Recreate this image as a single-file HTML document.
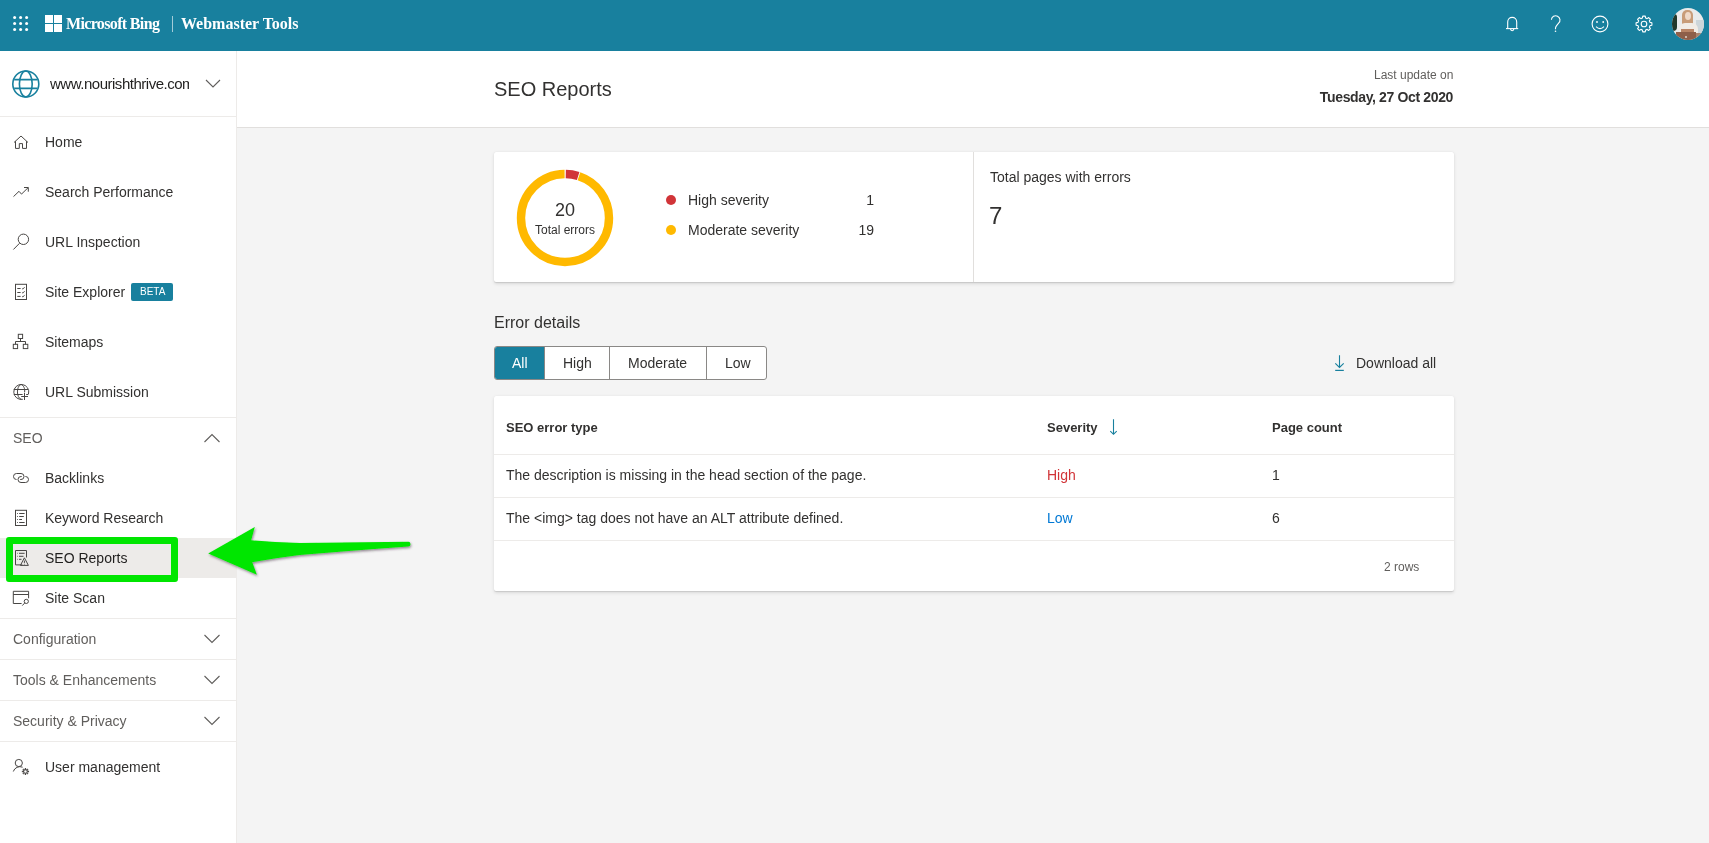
<!DOCTYPE html>
<html><head><meta charset="utf-8">
<style>
*{margin:0;padding:0;box-sizing:border-box}
html,body{width:1709px;height:843px;overflow:hidden;background:#f4f4f4;font-family:"Liberation Sans",sans-serif;color:#323130}
.a{position:absolute;white-space:nowrap;line-height:1;will-change:transform}
#hdr{position:absolute;left:0;top:0;width:1709px;height:51px;background:#18809e}
#side{position:absolute;left:0;top:51px;width:236px;height:792px;background:#fff}
#sideb{position:absolute;left:236px;top:51px;width:1px;height:792px;background:#edebe9}
.sep{position:absolute;left:0;width:236px;height:1px;background:#edebe9}
.nav{font-size:14px;color:#323130}
.sec{font-size:14px;color:#605e5c}
svg{position:absolute;overflow:visible}
#phdr{position:absolute;left:237px;top:51px;width:1472px;background:#fff;border-bottom:1px solid #e1dfdd;height:77px}
.card{position:absolute;background:#fff;border-radius:2px;box-shadow:0 0.3px 0.9px rgba(0,0,0,.1),0 1.6px 3.6px rgba(0,0,0,.11)}
</style></head><body>
<!-- HEADER -->
<div id="hdr"></div>
<svg style="left:0;top:0" width="1709" height="50">
<g fill="#fff">
<circle cx="14.6" cy="17.5" r="1.5"/><circle cx="20.6" cy="17.5" r="1.5"/><circle cx="26.6" cy="17.5" r="1.5"/>
<circle cx="14.6" cy="23.5" r="1.5"/><circle cx="20.6" cy="23.5" r="1.5"/><circle cx="26.6" cy="23.5" r="1.5"/>
<circle cx="14.6" cy="29.5" r="1.5"/><circle cx="20.6" cy="29.5" r="1.5"/><circle cx="26.6" cy="29.5" r="1.5"/>
<rect x="45" y="15" width="8" height="8"/><rect x="54" y="15" width="8" height="8"/>
<rect x="45" y="24" width="8" height="8"/><rect x="54" y="24" width="8" height="8"/>
</g>
<rect x="172" y="16" width="1" height="16" fill="rgba(255,255,255,.6)"/>
<g fill="none" stroke="#fff" stroke-width="1.1">
<path d="M1507.7 28.5 V21.9 A4.5 4.5 0 0 1 1516.7 21.9 V28.5"/>
<path d="M1506 28.6 H1518.2"/>
<path d="M1510.6 29.1 A1.6 1.6 0 0 0 1513.8 29.1"/>
<path d="M1551.4 19.8 A4.3 4.3 0 1 1 1558.6 23.2 L1556.6 25.6 Q1555.5 26.9 1555.5 28.2 V29.2"/>
<circle cx="1600" cy="24" r="7.9"/>
<path d="M1596 26.6 Q1600 30.6 1604 26.6"/>
<path d="M1649.99 22.40 L1651.90 22.75 L1651.90 25.25 L1649.99 25.60 L1649.37 27.10 L1650.47 28.70 L1648.70 30.47 L1647.10 29.37 L1645.60 29.99 L1645.25 31.90 L1642.75 31.90 L1642.40 29.99 L1640.90 29.37 L1639.30 30.47 L1637.53 28.70 L1638.63 27.10 L1638.01 25.60 L1636.10 25.25 L1636.10 22.75 L1638.01 22.40 L1638.63 20.90 L1637.53 19.30 L1639.30 17.53 L1640.90 18.63 L1642.40 18.01 L1642.75 16.10 L1645.25 16.10 L1645.60 18.01 L1647.10 18.63 L1648.70 17.53 L1650.47 19.30 L1649.37 20.90Z" stroke-linejoin="round"/>
<circle cx="1644" cy="24" r="2.8"/>
</g>
<g fill="#fff"><circle cx="1555.5" cy="31.3" r="0.8"/><circle cx="1597" cy="22" r="0.9"/><circle cx="1603.2" cy="22" r="0.9"/></g>
</svg>
<div class="a" style="left:66px;top:15.6px;font:bold 16px/1 'Liberation Serif',serif;color:#fff;letter-spacing:-0.65px">Microsoft Bing</div>
<div class="a" style="left:181px;top:15.6px;font:bold 16px/1 'Liberation Serif',serif;color:#fff">Webmaster Tools</div>
<div style="position:absolute;left:1672px;top:8px;width:32px;height:32px;border-radius:50%;overflow:hidden;background:#e9ebeb">
<div style="position:absolute;left:0;top:0;width:32px;height:32px;filter:blur(0.7px)">
 <div style="position:absolute;left:24px;top:12px;width:8px;height:13px;background:#cdd6da"></div>
 <div style="position:absolute;left:-1px;top:6px;width:6px;height:17px;border-radius:0 3px 4px 0;background:#22382a"></div>
 <div style="position:absolute;left:10px;top:2px;width:11px;height:17px;border-radius:5px 5px 3px 3px;background:#c89c78"></div>
 <div style="position:absolute;left:13px;top:4px;width:6px;height:8px;border-radius:50%;background:#efd9c8"></div>
 <div style="position:absolute;left:7px;top:15px;width:19px;height:12px;border-radius:6px 6px 0 0;background:#f1ece6"></div>
 <div style="position:absolute;left:9px;top:21px;width:13px;height:4px;background:#b98465"></div>
 <div style="position:absolute;left:24px;top:25px;width:8px;height:5px;background:#a98570"></div>
 <div style="position:absolute;left:4px;top:24px;width:20px;height:10px;background:#8e5f49"></div>
 <div style="position:absolute;left:13px;top:28px;width:2px;height:2px;background:#e2d2c8;border-radius:50%"></div>
</div>
</div>
<!-- SIDEBAR -->
<div id="side"></div>
<div id="sideb"></div>
<div class="sep" style="top:116px"></div>
<div class="sep" style="top:417px"></div>
<div class="sep" style="top:618px"></div>
<div class="sep" style="top:659px"></div>
<div class="sep" style="top:700px"></div>
<div class="sep" style="top:741px"></div>
<div style="position:absolute;left:0;top:538px;width:236px;height:40px;background:#edebe9"></div>
<svg style="left:0;top:0" width="240" height="843">
<g fill="none" stroke="#18809e" stroke-width="1.6">
<circle cx="25.8" cy="84" r="13"/>
<ellipse cx="25.8" cy="84" rx="6.4" ry="13"/>
<path d="M14.2 79.6 H37.4 M14.2 88.4 H37.4"/>
</g>
<path d="M206 80 L213 87 L220 80" fill="none" stroke="#605e5c" stroke-width="1.1"/>
<g fill="none" stroke="#484644" stroke-width="1">
<!-- home -->
<path d="M14 142.5 L21 136 L28 142.5 M15.5 141.2 V148.4 H19.3 V143.6 H22.5 V148.4 H26.5 V141.2"/>
<!-- search perf -->
<path d="M13.5 196.6 L19 191.3 L21.5 194.1 L28.2 187.6 M24 187.5 H28.3 V191.7"/>
<!-- url inspection -->
<circle cx="23.4" cy="239.3" r="5.2"/>
<path d="M19.6 243.2 L13.4 249.5"/>
<!-- site explorer -->
<rect x="15.5" y="284.3" width="11" height="15.2"/>
<path d="M17.3 288.5 H20.6 M17.3 292.5 H20.6 M17.3 296.4 H20.6"/>
<path d="M22 288.3 L23 289.2 L24.7 287 M22 292.3 L23 293.2 L24.7 291 M22 296.2 L23 297.1 L24.7 294.9" stroke-width=".8"/>
<!-- sitemaps -->
<rect x="18.3" y="334.3" width="4.3" height="4.2"/>
<rect x="13.3" y="344.3" width="4.3" height="4.3"/>
<rect x="23.3" y="344.3" width="4.5" height="4.3"/>
<path d="M20.5 338.5 V341.5 M15.5 344.3 V341.5 H25.5 V344.3"/>
<!-- url submission -->
<path d="M22.8 399.3 A7.5 7.5 0 1 1 28.5 394"/>
<path d="M21 384.3 C16.2 386.5 16.2 397.5 21.2 399.4 M21 384.3 C24.2 386 25 389 24.6 392.2"/>
<path d="M13.8 389.5 H28.2 M13.8 394.5 H22.6 M26.2 394.5 H28.4"/>
<path d="M24.5 392.8 V400 M21.2 396.5 H28"/>
<!-- backlinks -->
<path d="M16.5 479.5 A3 3 0 0 1 16.5 473.5 H21 A3 3 0 0 1 21 479.5 H20.2"/>
<path d="M21.7 476.5 H21 A3 3 0 0 0 21 482.5 H25.5 A3 3 0 0 0 25.5 476.5 H25.3"/>
<!-- keyword research -->
<rect x="15.5" y="510.3" width="11" height="15.2"/>
<path d="M19.2 513.5 H24.6 M19.2 516.5 H23.8 M19.2 519.5 H22 M19.2 522.5 H24.6"/>
<path d="M17.1 513.5 H17.9 M17.1 516.5 H17.9 M17.1 519.5 H17.9 M17.1 522.5 H17.9" stroke-width="1.1"/>
<!-- seo reports -->
<path d="M22.3 564.9 H15.5 V550.5 H26.5 V557.5"/>
<path d="M17.2 553.3 H17.8 M17.2 556.3 H17.8 M17.2 559.3 H17.8 M19 553.3 H24.6 M19 556.3 H23.5 M19 559.3 H21.5"/>
<path d="M24.4 557.8 L28.4 565.4 H20.4 Z M24.4 560.6 V562.9 M24.4 563.8 V564.4"/>
<!-- site scan -->
<path d="M21.6 603.5 H13.3 V591.3 H28.6 V598.3 M13.3 594.5 H28.6"/>
<circle cx="26.3" cy="601.4" r="2.1"/>
<path d="M24.8 602.9 L22.3 605.6"/>
<!-- user mgmt -->
<circle cx="18.8" cy="763" r="3.6"/>
<path d="M13.3 771.5 A7 7 0 0 1 22.6 767.2"/>
<circle cx="25.45" cy="771.5" r="1.9" stroke-width="1.2"/>
<path d="M27.95 771.50 L29.05 771.50 M27.22 773.27 L28.00 774.05 M25.45 774.00 L25.45 775.10 M23.68 773.27 L22.90 774.05 M22.95 771.50 L21.85 771.50 M23.68 769.73 L22.90 768.95 M25.45 769.00 L25.45 767.90 M27.22 769.73 L28.00 768.95" stroke-width="1.3"/>
</g>
<g fill="none" stroke="#605e5c" stroke-width="1.1">
<path d="M204.5 442 L212 434.5 L219.5 442"/>
<path d="M204.5 635 L212 642.5 L219.5 635"/>
<path d="M204.5 676 L212 683.5 L219.5 676"/>
<path d="M204.5 717 L212 724.5 L219.5 717"/>
</g>
</svg>
<div class="a" style="left:50px;top:76.3px;font-size:15px;letter-spacing:-0.48px;color:#201f1e;width:138.6px;overflow:hidden">www.nourishthrive.com</div>
<div class="a nav" style="left:45px;top:135.2px">Home</div>
<div class="a nav" style="left:45px;top:185.2px">Search Performance</div>
<div class="a nav" style="left:45px;top:235.2px">URL Inspection</div>
<div class="a nav" style="left:45px;top:285.2px">Site Explorer</div>
<div style="position:absolute;left:131px;top:283px;width:42px;height:18px;background:#18809e;border-radius:2px"></div>
<div class="a" style="left:140px;top:286.5px;font-size:10px;color:#fff">BETA</div>
<div class="a nav" style="left:45px;top:335.2px">Sitemaps</div>
<div class="a nav" style="left:45px;top:385.2px">URL Submission</div>
<div class="a sec" style="left:13px;top:431.2px">SEO</div>
<div class="a nav" style="left:45px;top:471.2px">Backlinks</div>
<div class="a nav" style="left:45px;top:511.2px">Keyword Research</div>
<div class="a nav" style="left:45px;top:551.2px;color:#201f1e">SEO Reports</div>
<div class="a nav" style="left:45px;top:591.2px">Site Scan</div>
<div class="a sec" style="left:13px;top:632.2px">Configuration</div>
<div class="a sec" style="left:13px;top:673.2px">Tools &amp; Enhancements</div>
<div class="a sec" style="left:13px;top:714.2px">Security &amp; Privacy</div>
<div class="a nav" style="left:45px;top:760.2px">User management</div>
<!-- PAGE HEADER -->
<div id="phdr"></div>
<div class="a" style="left:494px;top:79.1px;font-size:20px;color:#323130">SEO Reports</div>
<div class="a" style="left:1374px;top:68.8px;font-size:12px;color:#605e5c;width:79px;text-align:right">Last update on</div>
<div class="a" style="left:1303px;top:90px;font-size:14px;letter-spacing:-0.36px;font-weight:bold;color:#323130;width:150px;text-align:right">Tuesday, 27 Oct 2020</div>
<!-- summary card -->
<div class="card" style="left:494px;top:152px;width:960px;height:130px"></div>
<div style="position:absolute;left:973px;top:152px;width:1px;height:130px;background:#e1dfdd"></div>
<svg style="left:0;top:0" width="1709" height="843">
<circle cx="565" cy="218" r="44" fill="none" stroke="#ffb900" stroke-width="8.4" stroke-dasharray="261.4 15.06" stroke-dashoffset="-14.2" transform="rotate(-90 565 218)"/>
<circle cx="565" cy="218" r="44" fill="none" stroke="#d13438" stroke-width="8.4" stroke-dasharray="12.6 263.86" stroke-dashoffset="-0.8" transform="rotate(-90 565 218)"/>
<circle cx="671" cy="200" r="5" fill="#d13438"/>
<circle cx="671" cy="230" r="5" fill="#ffb900"/>
</svg>
<div class="a" style="left:545px;top:200.8px;font-size:18px;width:40px;text-align:center;color:#323130">20</div>
<div class="a" style="left:525px;top:223.8px;font-size:12px;width:80px;text-align:center;color:#323130">Total errors</div>
<div class="a" style="left:688px;top:193.2px;font-size:14px;color:#323130">High severity</div>
<div class="a" style="left:688px;top:223.2px;font-size:14px;color:#323130">Moderate severity</div>
<div class="a" style="left:834px;top:193.2px;font-size:14px;width:40px;text-align:right;color:#323130">1</div>
<div class="a" style="left:834px;top:223.2px;font-size:14px;width:40px;text-align:right;color:#323130">19</div>
<div class="a" style="left:990px;top:170.2px;font-size:14px;color:#323130">Total pages with errors</div>
<div class="a" style="left:988.5px;top:203.7px;font-size:24px;color:#323130">7</div>
<!-- error details -->
<div class="a" style="left:494px;top:314.5px;font-size:16px;color:#323130">Error details</div>
<div style="position:absolute;left:494px;top:346px;width:273px;height:34px;border:1px solid #8a8886;border-radius:3px;background:#fff;overflow:hidden">
 <div style="position:absolute;left:0;top:0;width:49px;height:32px;background:#18809e"></div>
 <div style="position:absolute;left:49px;top:0;width:1px;height:32px;background:#8a8886"></div>
 <div style="position:absolute;left:114px;top:0;width:1px;height:32px;background:#8a8886"></div>
 <div style="position:absolute;left:211px;top:0;width:1px;height:32px;background:#8a8886"></div>
</div>
<div class="a" style="left:511.5px;top:356.2px;font-size:14px;color:#fff">All</div>
<div class="a" style="left:562.5px;top:356.2px;font-size:14px;color:#323130">High</div>
<div class="a" style="left:628px;top:356.2px;font-size:14px;color:#323130">Moderate</div>
<div class="a" style="left:724.5px;top:356.2px;font-size:14px;color:#323130">Low</div>
<svg style="left:0;top:0" width="1709" height="843">
<g fill="none" stroke="#18809e" stroke-width="1.1">
<path d="M1339.5 355.2 V367.4 M1335.3 363.3 L1339.5 367.5 L1343.7 363.3"/>
<path d="M1335.2 370.4 H1343.8" stroke-width="1.2"/>
</g>
</svg>
<div class="a" style="left:1356px;top:356.2px;font-size:14px;color:#323130">Download all</div>
<!-- table -->
<div class="card" style="left:494px;top:396px;width:960px;height:195px"></div>
<div style="position:absolute;left:494px;top:454px;width:960px;height:1px;background:#edebe9"></div>
<div style="position:absolute;left:494px;top:497px;width:960px;height:1px;background:#edebe9"></div>
<div style="position:absolute;left:494px;top:540px;width:960px;height:1px;background:#edebe9"></div>
<div class="a" style="left:505.5px;top:421px;font-size:13px;font-weight:bold;color:#323130">SEO error type</div>
<div class="a" style="left:1047px;top:421px;font-size:13px;font-weight:bold;color:#323130">Severity</div>
<div class="a" style="left:1271.5px;top:421px;font-size:13px;font-weight:bold;color:#323130">Page count</div>
<div class="a" style="left:505.5px;top:468.2px;font-size:14px;color:#323130">The description is missing in the head section of the page.</div>
<div class="a" style="left:1047px;top:468.2px;font-size:14px;color:#d13438">High</div>
<div class="a" style="left:1271.5px;top:468.2px;font-size:14px;color:#323130">1</div>
<div class="a" style="left:505.5px;top:511.2px;font-size:14px;color:#323130">The &lt;img&gt; tag does not have an ALT attribute defined.</div>
<div class="a" style="left:1047px;top:511.2px;font-size:14px;color:#0078d4">Low</div>
<div class="a" style="left:1271.5px;top:511.2px;font-size:14px;color:#323130">6</div>
<div class="a" style="left:1384px;top:560.8px;font-size:12px;color:#605e5c">2 rows</div>
<svg style="left:0;top:0" width="1709" height="843"><path d="M1113.5 419.2 V434 M1110.3 431.1 L1113.5 434.3 L1116.7 431.1" fill="none" stroke="#18809e" stroke-width="1.1"/></svg>
<!-- annotation -->
<div style="position:absolute;left:6px;top:537px;width:172px;height:45px;border:7px solid #00e600;border-radius:3px"></div>
<svg style="left:0;top:0" width="1709" height="843">
<defs><filter id="sh" x="-10%" y="-50%" width="120%" height="200%"><feDropShadow dx="0.8" dy="1.4" stdDeviation="1.2" flood-color="#3a2a3a" flood-opacity="0.55"/></filter></defs>
<path filter="url(#sh)" fill="#00e600" d="M208.2 553.5 L254.8 527.1 L251.2 540.3 Q275 542.2 300 543 L408 541.8 A2.3 2.3 0 0 1 408.4 546.4 Q350 550.6 300 555 Q275 558 252.3 562.3 L256.9 574.8 Z"/>
</svg>
</body></html>
